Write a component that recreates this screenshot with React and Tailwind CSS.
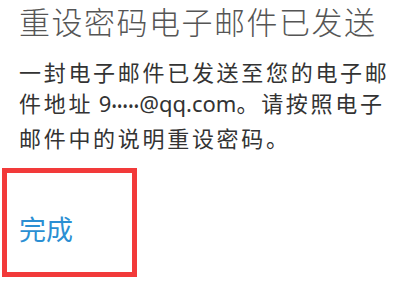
export default function App() {
  return (
    <div className="w-[400px] h-[300px] bg-white overflow-hidden font-['Noto_Sans_CJK_SC',sans-serif]">
      <div className="pl-[19px] pt-[3px]">
        <h1 className="text-[31px] leading-[36px] font-light tracking-[1.5px] text-[#555555] whitespace-nowrap">
          重设密码电子邮件已发送
        </h1>
        <p className="mt-[17px] text-[22px] leading-[31px] tracking-[2.7px] text-[#333333] w-[385px]">
          一封电子邮件已发送至您的电子邮件地址
          <span className="font-['Noto_Sans',sans-serif] tracking-normal">
            {' '}9<span className="text-[14px] tracking-[0.3px]">•••••</span>@qq.com
          </span>
          。请按照电子邮件中的说明重设密码。
        </p>
      </div>
      <div className="mt-[15px] ml-[2px] w-[135px] h-[109px] border-[5px] border-[#f23a3a] flex items-end pl-[12px] pb-[30px]">
        <button className="text-[27px] leading-none text-[#2b8fd3]">完成</button>
      </div>
    </div>
  );
}
